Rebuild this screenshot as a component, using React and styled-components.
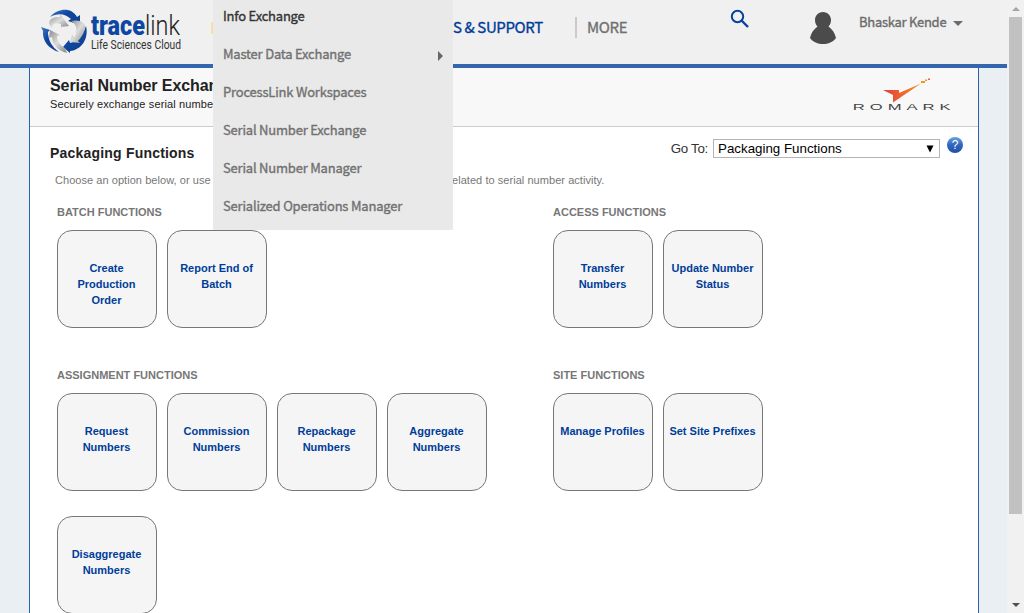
import React from 'react';
import styled, { createGlobalStyle } from 'styled-components';

const sans = '"Liberation Sans", Arial, sans-serif';
const humanist = '"Noto Sans CJK SC", "Open Sans", sans-serif';

const GlobalStyle = createGlobalStyle`
  *, *::before, *::after { box-sizing: border-box; }
  html, body { margin: 0; padding: 0; height: 100%; overflow: hidden; }
  body { font-family: ${sans}; background: #eaeff3; }
`;

const Window = styled.div`
  display: flex;
  width: 1024px;
  height: 613px;
  overflow: hidden;
  position: relative;
`;

const Page = styled.div`
  width: 1007px;
  height: 613px;
  display: flex;
  flex-direction: column;
  background: #eaeff3;
`;

const Header = styled.header`
  flex: none;
  height: 68px;
  display: flex;
  align-items: flex-start;
  background: #f0f0f0;
  border-bottom: 4px solid #3465af;
`;

const Brand = styled.svg`
  display: block;
  flex: none;
  width: 171px;
  height: 52px;
  margin: 4px 0 0 40px;
`;

const ActiveTab = styled.span`
  width: 2px;
  height: 12px;
  margin-top: 22px;
  background: #f8e0a8;
`;

const NavItem = styled.a`
  font-family: ${humanist};
  font-size: 15px;
  line-height: 20px;
  letter-spacing: -0.38px;
  white-space: nowrap;
  color: ${(p) => p.$color};
  -webkit-text-stroke: 0.35px ${(p) => p.$color};
`;

const Nav = styled.nav`
  display: flex;
  width: 278px;
  margin: 17px 0 0 240px;
`;

const Divider = styled.span`
  width: 2px;
  height: 21px;
  margin: 0 10px 0 auto;
  background: #cacaca;
`;

const MoreSlot = styled.span`
  width: 144px;
  display: block;
`;

const SearchIcon = styled.svg`
  display: block;
  width: 20px;
  height: 20px;
  margin: 9px 0 0 -1px;
`;

const Avatar = styled.svg`
  display: block;
  width: 28px;
  height: 33px;
  margin: 12px 0 0 59px;
`;

const User = styled.div`
  display: flex;
  flex: none;
  align-items: center;
  gap: 5px;
  margin: 12px 0 0 22px;
`;

const UserName = styled.span`
  font-family: ${humanist};
  font-size: 13px;
  line-height: 20px;
  letter-spacing: -0.27px;
  width: 89px;
  white-space: nowrap;
  color: #6c6c6c;
  -webkit-text-stroke: 0.35px #6c6c6c;
`;

const Caret = styled.span`
  border: 5px solid transparent;
  border-top-color: #6c6c6c;
  border-bottom: 0;
  margin-top: 2px;
`;

const Panel = styled.main`
  flex: 1;
  width: 950px;
  margin-left: 29px;
  background: #fff;
  border: solid #2a62ad;
  border-width: 0 1px;
`;

const TitleBand = styled.div`
  display: flex;
  justify-content: space-between;
  height: 59px;
  padding: 8px 26px 0 20px;
  background: #f8f8f8;
  border-bottom: 1px solid #ccc;
`;

const PageTitle = styled.h1`
  margin: 0;
  font-size: 16px;
  line-height: 20px;
  letter-spacing: -0.08px;
  color: #222;
`;

const Tagline = styled.p`
  margin: 0;
  font-size: 11px;
  line-height: 16px;
  letter-spacing: 0.12px;
  color: #222;
`;

const Romark = styled.svg`
  display: block;
  width: 100px;
  height: 36px;
  margin-top: 1px;
`;

const Toolbar = styled.div`
  display: flex;
  justify-content: space-between;
  height: 45px;
  padding: 10px 14px 0 20px;
`;

const SectionTitle = styled.h2`
  margin: 6px 0 0;
  font-size: 14px;
  line-height: 20px;
  letter-spacing: 0.2px;
  color: #222;
`;

const GoTo = styled.div`
  display: flex;
  align-items: flex-start;
  font-size: 13.333px;
  line-height: 20px;
  color: #333;
`;

const GoToLabel = styled.label`
  margin: 2px 5px 0 0;
  letter-spacing: -0.3px;
`;

const Select = styled.div`
  display: flex;
  justify-content: space-between;
  align-items: center;
  width: 227px;
  height: 19px;
  margin: 2px 7px 0 0;
  padding: 0 5px 0 4px;
  border: 1px solid #b5b5b5;
  color: #000;
`;

const Help = styled.svg`
  display: block;
  width: 17px;
  height: 17px;
`;

const Intro = styled.p`
  display: flex;
  margin: 0;
  padding-left: 25px;
  font-size: 11px;
  line-height: 16px;
  white-space: nowrap;
  letter-spacing: 0.05px;
  color: #777;
`;

const IntroPart = styled.span`
  width: ${(p) => p.$width};
`;

const Groups = styled.div`
  display: grid;
  grid-template-columns: 496px 1fr;
  padding: 16px 0 0 27px;
`;

const Group = styled.section`
  height: ${(p) => p.$height}px;
`;

const GroupTitle = styled.h3`
  margin: 0 0 10px;
  font-size: 11px;
  line-height: 16px;
  color: #777;
`;

const Tiles = styled.div`
  display: flex;
  flex-wrap: wrap;
  gap: 25px 10px;
`;

const Tile = styled.a`
  width: 100px;
  height: 98px;
  padding: 29px 4px 0 3px;
  border: 1px solid #777;
  border-radius: 15px;
  background: #f5f5f5;
  color: #003d99;
  font-size: 11px;
  font-weight: bold;
  line-height: 16px;
  text-align: center;
  white-space: pre-line;
`;

const Menu = styled.ul`
  position: absolute;
  left: 213px;
  top: 0;
  width: 240px;
  height: 230px;
  margin: 0;
  padding: 0 10px;
  list-style: none;
  background: #e9e9e9;
`;

const MenuItem = styled.li`
  display: flex;
  justify-content: space-between;
  align-items: center;
  height: 38px;
  font-family: ${humanist};
  font-size: 13px;
  line-height: 20px;
  letter-spacing: -0.2px;
  color: ${(p) => (p.$active ? '#333' : '#717171')};
  -webkit-text-stroke: 0.35px;
  &:first-child { margin-top: -3px; }
`;

const SubmenuArrow = styled.span`
  border: 5px solid transparent;
  border-left-color: #666;
  border-right: 0;
  margin-top: 3px;
`;

const Scrollbar = styled.div`
  display: flex;
  flex-direction: column;
  align-items: center;
  width: 17px;
  height: 613px;
  padding: 7px 0 6px;
  background: #f1f1f1;
`;

const ScrollArrow = styled.span`
  border: 4px solid transparent;
  ${(p) => (p.$up ? 'border-bottom-color: #a3a3a3; border-top: 0;' : 'border-top-color: #505050; border-bottom: 0; margin-top: auto;')}
`;

const Thumb = styled.span`
  width: 13px;
  height: 497px;
  margin-top: 6px;
  background: #c1c1c1;
`;

const groups = [
  { title: 'BATCH FUNCTIONS', height: 163, tiles: ['Create\nProduction\nOrder', 'Report End of\nBatch'] },
  { title: 'ACCESS FUNCTIONS', height: 163, tiles: ['Transfer\nNumbers', 'Update Number\nStatus'] },
  {
    title: 'ASSIGNMENT FUNCTIONS',
    height: 250,
    tiles: ['Request\nNumbers', 'Commission\nNumbers', 'Repackage\nNumbers', 'Aggregate\nNumbers', 'Disaggregate\nNumbers'],
  },
  { title: 'SITE FUNCTIONS', height: 250, tiles: ['Manage Profiles', 'Set Site Prefixes'] },
];

const menu = [
  'Info Exchange',
  'Master Data Exchange',
  'ProcessLink Workspaces',
  'Serial Number Exchange',
  'Serial Number Manager',
  'Serialized Operations Manager',
];

function TracelinkLogo() {
  return (
    <Brand viewBox="0 0 171 52">
      <defs>
        <linearGradient id="blue" x1="0" y1="0" x2="1" y2="1">
          <stop offset="0" stopColor="#4b7cc4" />
          <stop offset="0.4" stopColor="#0d47a1" />
          <stop offset="1" stopColor="#123f8c" />
        </linearGradient>
        <linearGradient id="steel" x1="0" y1="0" x2="1" y2="1">
          <stop offset="0" stopColor="#8d8d8d" />
          <stop offset="0.5" stopColor="#dcdcdc" />
          <stop offset="1" stopColor="#858585" />
        </linearGradient>
      </defs>
      <path fill="url(#blue)" d="M10 13 C15 7 22 5 28 6 C33 7 36 11 37 13 L40 11 L40 21 L28 17 L31 15 C25 9 17 9 10 13Z" />
      <path fill="url(#blue)" d="M1 23 L10 26 L8 28 C8 36 12 43 19 48 C9 45 2 37 3 27Z" />
      <path fill="url(#blue)" d="M46 22 C49 34 42 46 30 47 L30 49 L23 43 L29 36 L30 39 C38 37 43 31 46 22Z" />
      <path fill="url(#steel)" d="M12 24 C6 19 10 12 20 13 L20 10 L29 22 L21 23 L21 20 C15 18 12 20 12 24Z" />
      <path fill="url(#steel)" d="M31 17 C39 15 46 18 45 24 C44 30 40 35 38 37 L40 39 L30 38 L32 31 L34 33 C38 28 37 20 31 17Z" />
      <path fill="url(#steel)" d="M10 26 L20 31 L17 32 C17 38 21 42 25 44 L27 49 C18 47 12 40 12 33 L9 34Z" />
      <text x="51" y="31" fontFamily="Roboto" fontSize="27" textLength="89" lengthAdjust="spacingAndGlyphs">
        <tspan fontWeight="900" fill="#0d47a1">trace</tspan><tspan fontWeight="300" fill="#222">link</tspan>
      </text>
      <text x="51" y="45" fontFamily="Roboto" fontSize="12" fill="#333" textLength="90" lengthAdjust="spacingAndGlyphs">Life Sciences Cloud</text>
    </Brand>
  );
}

function RomarkLogo() {
  return (
    <Romark viewBox="0 0 100 36">
      <defs>
        <linearGradient id="flame" x1="0" y1="0" x2="1" y2="0">
          <stop offset="0" stopColor="#d9413c" />
          <stop offset="0.4" stopColor="#ef5a33" />
          <stop offset="1" stopColor="#f7941e" />
        </linearGradient>
      </defs>
      <path fill="url(#flame)" d="M31 13 L47 13 L47 16 L69 6.500 L41 25.500 L41 18Z" />
      <path fill="#f7941e" d="M69 4h4v2h-4zM73 2.500h2v1.500h-2z" />
      <path fill="#e8604c" d="M76 1.500h2v1.500h-2z" />
      <text transform="scale(1.75 1)" x="0.400" y="33" fontFamily="Liberation Sans" fontSize="9.500" fill="#444" textLength="56" lengthAdjust="spacing">ROMARK</text>
    </Romark>
  );
}

export default function App() {
  return (
    <Window>
      <GlobalStyle />
      <Page>
        <Header>
          <TracelinkLogo />
          <ActiveTab />
          <Nav>
            <NavItem $color="#003d99">S &amp; SUPPORT</NavItem>
            <Divider />
            <MoreSlot><NavItem $color="#717171">MORE</NavItem></MoreSlot>
          </Nav>
          <SearchIcon viewBox="0 0 20 20" fill="none" stroke="#0642a0">
            <circle cx="7.500" cy="7.500" r="5.700" strokeWidth="2" />
            <path d="M11.500 11.500 L18 18" strokeWidth="2.400" />
          </SearchIcon>
          <Avatar viewBox="0 0 28 33" fill="#4b4b4b">
            <path d="M14 0 C19 0 22 4 22 8 C22 11 21 13 19.500 14.500 C23 17 26 21 27 26 C24 30 19 32 14 32 C9 32 4 30 1 26 C2 21 5 17 8.500 14.500 C7 13 6 11 6 8 C6 4 9 0 14 0Z" />
          </Avatar>
          <User>
            <UserName>Bhaskar Kende</UserName>
            <Caret />
          </User>
        </Header>
        <Panel>
          <TitleBand>
            <div>
              <PageTitle>Serial Number Exchange</PageTitle>
              <Tagline>Securely exchange serial numbers</Tagline>
            </div>
            <RomarkLogo />
          </TitleBand>
          <Toolbar>
            <SectionTitle>Packaging Functions</SectionTitle>
            <GoTo>
              <GoToLabel>Go To:</GoToLabel>
              <Select>
                Packaging Functions
                <svg width="8" height="8"><path d="M0.500 0.500h7L4 7.500z" /></svg>
              </Select>
              <Help viewBox="0 0 17 17">
                <defs>
                  <linearGradient id="orb" x1="0" y1="0" x2="0" y2="1">
                    <stop offset="0" stopColor="#6da0df" />
                    <stop offset="0.5" stopColor="#2f66bd" />
                    <stop offset="1" stopColor="#2350a8" />
                  </linearGradient>
                </defs>
                <circle cx="8" cy="8" r="8" fill="url(#orb)" />
                <text x="8" y="12" textAnchor="middle" fontFamily="Liberation Sans" fontSize="12" fill="#fff">?</text>
              </Help>
            </GoTo>
          </Toolbar>
          <Intro>
            <IntroPart $width="397px">Choose an option below, or use</IntroPart>
            <IntroPart>elated to serial number activity.</IntroPart>
          </Intro>
          <Groups>
            {groups.map((g) => (
              <Group key={g.title} $height={g.height}>
                <GroupTitle>{g.title}</GroupTitle>
                <Tiles>
                  {g.tiles.map((t) => <Tile key={t}>{t}</Tile>)}
                </Tiles>
              </Group>
            ))}
          </Groups>
        </Panel>
      </Page>
      <Scrollbar>
        <ScrollArrow $up />
        <Thumb />
        <ScrollArrow />
      </Scrollbar>
      <Menu>
        {menu.map((label, i) => (
          <MenuItem key={label} $active={i === 0}>
            {label}
            {i === 1 && <SubmenuArrow />}
          </MenuItem>
        ))}
      </Menu>
    </Window>
  );
}
